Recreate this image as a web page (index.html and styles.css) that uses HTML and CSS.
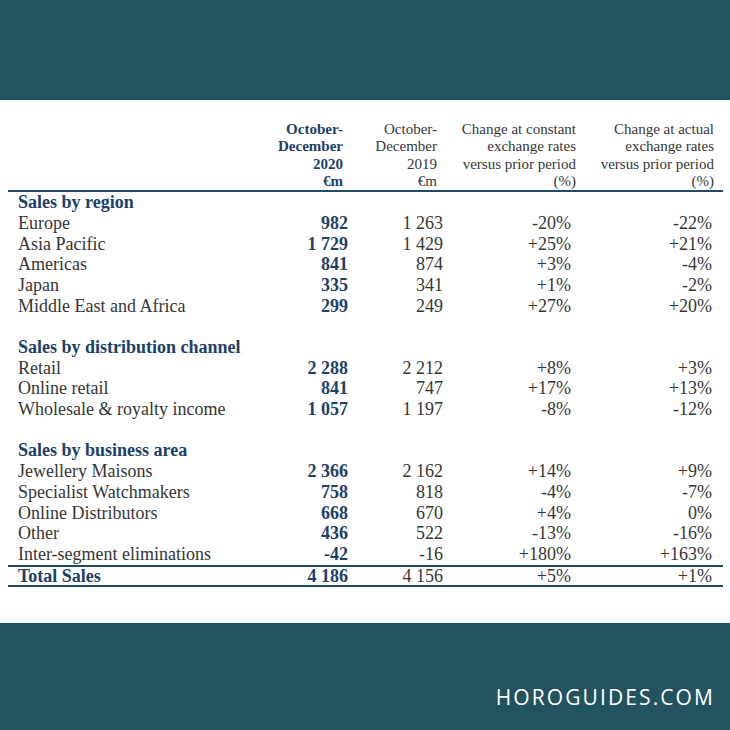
FILE: index.html
```html
<!DOCTYPE html>
<html lang="en">
<head>
<meta charset="utf-8">
<title>Sales October-December 2020</title>
<link rel="stylesheet" href="styles.css">
</head>
<body>
<div class="band band-top"></div>
<main class="sheet">
  <div class="table">
    <div class="row head">
      <div class="cell label"></div>
      <div class="cell num strong">October-<br>December<br>2020<br>€m</div>
      <div class="cell num">October-<br>December<br>2019<br>€m</div>
      <div class="cell num">Change at constant<br>exchange rates<br>versus prior period<br>(%)</div>
      <div class="cell num">Change at actual<br>exchange rates<br>versus prior period<br>(%)</div>
    </div>

    <div class="row section"><div class="cell label">Sales by region</div></div>
    <div class="row"><div class="cell label">Europe</div><div class="cell num strong">982</div><div class="cell num">1 263</div><div class="cell num">-20%</div><div class="cell num">-22%</div></div>
    <div class="row"><div class="cell label">Asia Pacific</div><div class="cell num strong">1 729</div><div class="cell num">1 429</div><div class="cell num">+25%</div><div class="cell num">+21%</div></div>
    <div class="row"><div class="cell label">Americas</div><div class="cell num strong">841</div><div class="cell num">874</div><div class="cell num">+3%</div><div class="cell num">-4%</div></div>
    <div class="row"><div class="cell label">Japan</div><div class="cell num strong">335</div><div class="cell num">341</div><div class="cell num">+1%</div><div class="cell num">-2%</div></div>
    <div class="row"><div class="cell label">Middle East and Africa</div><div class="cell num strong">299</div><div class="cell num">249</div><div class="cell num">+27%</div><div class="cell num">+20%</div></div>
    <div class="row spacer"></div>

    <div class="row section"><div class="cell label">Sales by distribution channel</div></div>
    <div class="row"><div class="cell label">Retail</div><div class="cell num strong">2 288</div><div class="cell num">2 212</div><div class="cell num">+8%</div><div class="cell num">+3%</div></div>
    <div class="row"><div class="cell label">Online retail</div><div class="cell num strong">841</div><div class="cell num">747</div><div class="cell num">+17%</div><div class="cell num">+13%</div></div>
    <div class="row"><div class="cell label">Wholesale &amp; royalty income</div><div class="cell num strong">1 057</div><div class="cell num">1 197</div><div class="cell num">-8%</div><div class="cell num">-12%</div></div>
    <div class="row spacer"></div>

    <div class="row section"><div class="cell label">Sales by business area</div></div>
    <div class="row"><div class="cell label">Jewellery Maisons</div><div class="cell num strong">2 366</div><div class="cell num">2 162</div><div class="cell num">+14%</div><div class="cell num">+9%</div></div>
    <div class="row"><div class="cell label">Specialist Watchmakers</div><div class="cell num strong">758</div><div class="cell num">818</div><div class="cell num">-4%</div><div class="cell num">-7%</div></div>
    <div class="row"><div class="cell label">Online Distributors</div><div class="cell num strong">668</div><div class="cell num">670</div><div class="cell num">+4%</div><div class="cell num">0%</div></div>
    <div class="row"><div class="cell label">Other</div><div class="cell num strong">436</div><div class="cell num">522</div><div class="cell num">-13%</div><div class="cell num">-16%</div></div>
    <div class="row"><div class="cell label">Inter-segment eliminations</div><div class="cell num strong">-42</div><div class="cell num">-16</div><div class="cell num">+180%</div><div class="cell num">+163%</div></div>
    <div class="row total"><div class="cell label">Total Sales</div><div class="cell num strong">4 186</div><div class="cell num">4 156</div><div class="cell num">+5%</div><div class="cell num">+1%</div></div>
  </div>
</main>
<footer class="band band-bottom">
  <span class="brand">HOROGUIDES.COM</span>
</footer>
</body>
</html>
```

FILE: styles.css
```css
html, body {
  margin: 0;
  padding: 0;
  background: #ffffff;
}

body {
  width: 730px;
  height: 730px;
  overflow: hidden;
  display: flex;
  flex-direction: column;
  font-family: "Liberation Serif", "Times New Roman", serif;
  color: #363636;
}

.band {
  background: #23535f;
}

.band-top {
  height: 100px;
}

.sheet {
  height: 523px;
  padding: 21px 7px 0 8px;
  box-sizing: border-box;
}

.table {
  display: flex;
  flex-direction: column;
}

.row {
  display: grid;
  grid-template-columns: 259px 81px 95px 128px 141px;
  height: 20.7px;
  font-size: 18px;
  line-height: 20.7px;
}

.cell {
  white-space: nowrap;
}

.label {
  padding-left: 10px;
}

.num {
  text-align: right;
}

.strong {
  color: #1c4168;
  font-weight: bold;
}

.row.head {
  grid-template-columns: 259px 76px 94px 139px 138px;
  height: auto;
  font-size: 15px;
  line-height: 17.3px;
  border-bottom: 2px solid #1f4a6a;
}

.section .label,
.total .label {
  color: #1c4168;
  font-weight: bold;
}

.row.total {
  border-top: 2px solid #1f4a6a;
  border-bottom: 2px solid #1f4a6a;
  height: 18px;
  line-height: 19px;
}

.band-bottom {
  flex: 1;
  display: flex;
  justify-content: flex-end;
  align-items: flex-start;
  padding: 62px 17px 0 0;
}

.brand {
  font-family: "Open Sans", "DejaVu Sans", sans-serif;
  color: #ffffff;
  font-size: 21px;
  line-height: 24px;
  letter-spacing: 2.1px;
  margin-right: -2px;
}
```
